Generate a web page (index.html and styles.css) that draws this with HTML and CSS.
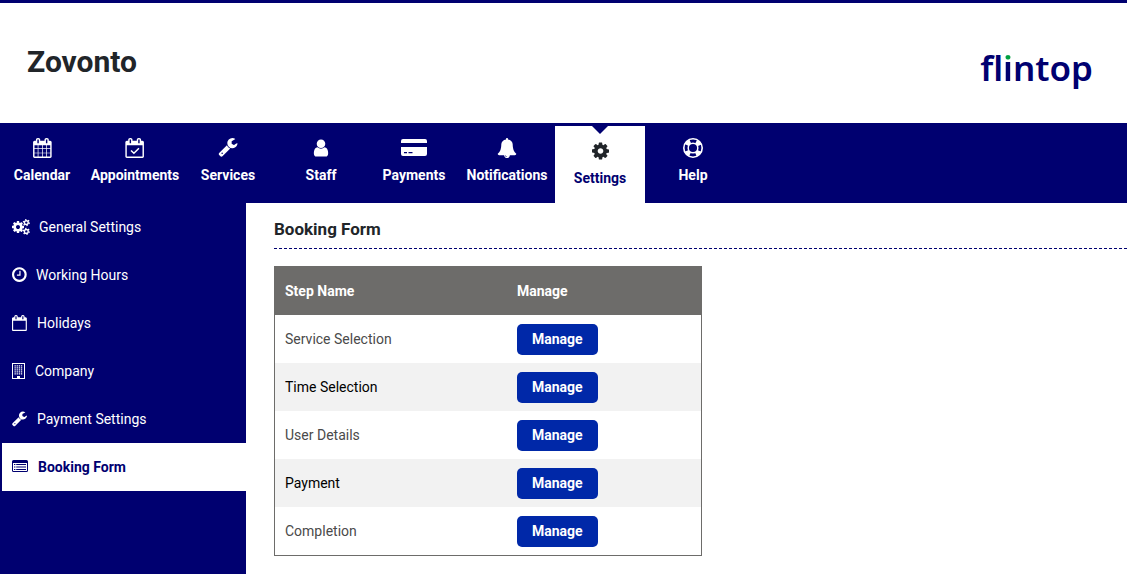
FILE: index.html
```html
<!DOCTYPE html>
<html lang="en">
<head>
<meta charset="utf-8">
<meta name="viewport" content="width=device-width, initial-scale=1">
<title>Zovonto - Booking Form</title>
<link rel="stylesheet" href="styles.css">
</head>
<body>
<svg class="sprite" aria-hidden="true">
  <symbol id="wrench" viewBox="64 128 1664 1664"><path d="M448 1472q0-26-19-45t-45-19-45 19-19 45 19 45 45 19 45-19 19-45zm644-420l-682 682q-37 37-90 37-52 0-91-37l-106-108q-38-36-38-90 0-53 38-91l681-681q39 98 114.500 173.500t173.500 114.500zm634-435q0 39-23 106-47 134-164.500 217.500t-258.500 83.500q-185 0-316.500-131.500t-131.500-316.500 131.500-316.500 316.500-131.500q58 0 121.500 16.500t107.500 46.500q16 11 16 28t-16 28l-293 169v224l193 107q5-3 79-48.500t135.500-81 70.500-35.500q15 0 23.500 10t8.500 25z"/></symbol>
  <symbol id="cog" viewBox="128 128 1536 1536"><path d="M1152 896q0-106-75-181t-181-75-181 75-75 181 75 181 181 75 181-75 75-181zm512-109v222q0 12-8 23t-20 13l-185 28q-19 54-39 91 35 50 107 138 10 12 10 25t-9 23q-27 37-99 108t-94 71q-12 0-26-9l-138-108q-44 23-91 38-16 136-29 186-7 28-36 28h-222q-14 0-24.500-8.500t-11.500-21.500l-28-184q-49-16-90-37l-141 107q-10 9-25 9-14 0-25-11-126-114-165-168-7-10-7-23 0-12 8-23 15-21 51-66.500t54-70.500q-27-50-41-99l-183-27q-13-2-21-12.500t-8-23.500v-222q0-12 8-23t19-13l186-28q14-46 39-92-40-57-107-138-10-12-10-24 0-10 9-23 26-36 98.500-107.500t94.500-71.500q13 0 26 10l138 107q44-23 91-38 16-136 29-186 7-28 36-28h222q14 0 24.500 8.500t11.500 21.500l28 184q49 16 90 37l142-107q9-9 24-9 13 0 25 10 129 119 165 170 7 8 7 22 0 12-8 23-15 21-51 66.500t-54 70.500q26 50 41 98l183 28q13 2 21 12.500t8 23.500z"/></symbol>
</svg>

<header class="header">
  <h1 class="title">Zovonto</h1>
  <a class="logo" href="#">fl<span class="logo-i">i</span>ntop</a>
</header>

<nav class="nav" aria-label="Main">
  <a class="nav-item" href="#">
    <svg class="nav-icon" width="20" height="20" viewBox="-32 0 1792 1792"><path d="M192 1664h288v-288h-288v288zm352 0h320v-288h-320v288zm-352-352h288v-320h-288v320zm352 0h320v-320h-320v320zm-352-384h288v-288h-288v288zm736 736h320v-288h-320v288zm-384-736h320v-288h-320v288zm768 736h288v-288h-288v288zm-384-352h320v-320h-320v320zm-352-864v-288q0-13-9.500-22.500t-22.500-9.500h-64q-13 0-22.500 9.500t-9.500 22.500v288q0 13 9.500 22.500t22.500 9.500h64q13 0 22.500-9.500t9.500-22.500zm736 864h288v-320h-288v320zm-384-384h320v-288h-320v288zm384 0h288v-288h-288v288zm32-480v-288q0-13-9.500-22.500t-22.500-9.500h-64q-13 0-22.500 9.500t-9.500 22.500v288q0 13 9.500 22.500t22.500 9.500h64q13 0 22.500-9.500t9.500-22.500zm384-64v1280q0 52-38 90t-90 38h-1408q-52 0-90-38t-38-90v-1280q0-52 38-90t90-38h128v-96q0-66 47-113t113-47h64q66 0 113 47t47 113v96h384v-96q0-66 47-113t113-47h64q66 0 113 47t47 113v96h128q52 0 90 38t38 90z"/></svg>
    <span>Calendar</span>
  </a>
  <a class="nav-item" href="#">
    <svg class="nav-icon" width="20" height="20" viewBox="32 0 1792 1792"><path d="M192 1664h1408v-1024h-1408v1024zm384-1216v-288q0-14-9-23t-23-9h-64q-14 0-23 9t-9 23v288q0 14 9 23t23 9h64q14 0 23-9t9-23zm768 0v-288q0-14-9-23t-23-9h-64q-14 0-23 9t-9 23v288q0 14 9 23t23 9h64q14 0 23-9t9-23zm384-64v1280q0 52-38 90t-90 38h-1408q-52 0-90-38t-38-90v-1280q0-52 38-90t90-38h128v-96q0-66 47-113t113-47h64q66 0 113 47t47 113v96h384v-96q0-66 47-113t113-47h64q66 0 113 47t47 113v96h128q52 0 90 38t38 90z"/><path class="line" d="M570 1110l260 260 450-450" stroke-width="130"/></svg>
    <span>Appointments</span>
  </a>
  <a class="nav-item" href="#">
    <svg class="nav-icon" width="20" height="20"><use href="#wrench" width="20" height="19"/></svg>
    <span>Services</span>
  </a>
  <a class="nav-item" href="#">
    <svg class="nav-icon" width="20" height="20" viewBox="0 0 1792 1792"><path d="M1536 1399q0 109-62.500 187t-150.500 78h-854q-88 0-150.500-78t-62.500-187q0-85 8.500-160.500t31.500-152 58.500-131 94-89 134.500-34.500q131 128 313 128t313-128q76 0 134.500 34.500t94 89 58.500 131 31.500 152 8.500 160.500zm-256-887q0 159-112.500 271.500t-271.500 112.500-271.500-112.500-112.500-271.500 112.500-271.500 271.500-112.500 271.500 112.500 112.500 271.500z"/></svg>
    <span>Staff</span>
  </a>
  <a class="nav-item" href="#">
    <svg class="nav-icon" width="26" height="20" viewBox="0 0 26 20"><path d="M0 5V3q0-2 2-2h22q2 0 2 2v2zM0 9h26v7q0 2-2 2H2q-2 0-2-2zM3 14v1.300h3V14zm4.500 0v1.300h4V14z" fill-rule="evenodd"/></svg>
    <span>Payments</span>
  </a>
  <a class="nav-item" href="#">
    <svg class="nav-icon" width="20" height="20" viewBox="0 0 1792 1792"><path d="M912 1696q0-16-16-16-59 0-101.500-42.500t-42.500-101.500q0-16-16-16t-16 16q0 73 51.500 124.500t124.500 51.500q16 0 16-16zm816-288q0 52-38 90t-90 38h-448q0 106-75 181t-181 75-181-75-75-181h-448q-52 0-90-38t-38-90q50-42 91-88t85-119.500 74.500-158.500 50-206 19.500-260q0-152 117-282.500t307-158.500q-8-19-8-39 0-40 28-68t68-28 68 28 28 68q0 20-8 39 190 28 307 158.500t117 282.500q0 139 19.500 260t50 206 74.500 158.500 85 119.500 91 88z"/></svg>
    <span>Notifications</span>
  </a>
  <a class="nav-item nav-item-active" href="#" aria-current="page">
    <svg class="nav-icon" width="20" height="20"><use href="#cog" x="2" y="1" width="17" height="18"/></svg>
    <span>Settings</span>
  </a>
  <a class="nav-item" href="#">
    <svg class="nav-icon" width="20" height="20" viewBox="0 0 20 20"><g class="line"><circle cx="10" cy="10" r="9.200" stroke-width="1.600"/><circle cx="10" cy="10" r="4.800" stroke-width="1.500"/><circle cx="10" cy="10" r="7" stroke-width="4.500" stroke-dasharray="5 5.996" stroke-dashoffset="-3"/></g></svg>
    <span>Help</span>
  </a>
</nav>

<div class="body">
  <nav class="sidebar" aria-label="Settings">
    <a class="side-item" href="#">
      <svg width="18" height="16" viewBox="0 0 18 16"><use href="#cog" x="0" y="2" width="12" height="12"/><g class="line" stroke-width="1.400"><circle cx="14.300" cy="3.600" r="1.900"/><circle cx="14.300" cy="12.400" r="1.900"/><circle cx="14.300" cy="3.600" r="2.900" stroke-dasharray="1.300 1.737"/><circle cx="14.300" cy="12.400" r="2.900" stroke-dasharray="1.300 1.737"/></g></svg>
      General Settings
    </a>
    <a class="side-item" href="#">
      <svg width="15" height="16" viewBox="128 177 1566 1538"><path d="M1024 544v448q0 14-9 23t-23 9h-320q-14 0-23-9t-9-23v-64q0-14 9-23t23-9h224v-352q0-14 9-23t23-9h64q14 0 23 9t9 23zm416 352q0-148-73-273t-198-198-273-73-273 73-198 198-73 273 73 273 198 198 273 73 273-73 198-198 73-273zm224 0q0 209-103 385.500t-279.500 279.500-385.500 103-385.500-103-279.500-279.500-103-385.500 103-385.500 279.500-279.500 385.500-103 385.500 103 279.500 279.500 103 385.500z"/></svg>
      Working Hours
    </a>
    <a class="side-item" href="#">
      <svg width="16" height="16" viewBox="64 0 1792 1792"><path d="M192 1664h1408v-1024h-1408v1024zm384-1216v-288q0-14-9-23t-23-9h-64q-14 0-23 9t-9 23v288q0 14 9 23t23 9h64q14 0 23-9t9-23zm768 0v-288q0-14-9-23t-23-9h-64q-14 0-23 9t-9 23v288q0 14 9 23t23 9h64q14 0 23-9t9-23zm384-64v1280q0 52-38 90t-90 38h-1408q-52 0-90-38t-38-90v-1280q0-52 38-90t90-38h128v-96q0-66 47-113t113-47h64q66 0 113 47t47 113v96h384v-96q0-66 47-113t113-47h64q66 0 113 47t47 113v96h128q52 0 90 38t38 90z"/></svg>
      Holidays
    </a>
    <a class="side-item" href="#">
      <svg width="14" height="16" viewBox="0 0 14 16"><path d="M0 0h13v16H0zM1 1v14h4v-2h3v2h4V1z" fill-rule="evenodd"/><path class="line" d="M2.500 2.800h8.500M2.500 4.800h8.500M2.500 6.800h8.500M2.500 8.800h8.500M2.500 10.800h8.500" stroke-width="1.200" stroke-dasharray="1.300 .8"/></svg>
      Company
    </a>
    <a class="side-item" href="#">
      <svg width="16" height="16"><use href="#wrench" width="15" height="16"/></svg>
      Payment Settings
    </a>
    <a class="side-item side-item-active" href="#" aria-current="page">
      <svg width="17" height="16" viewBox="0 0 17 16"><path d="M1.500 1h13q1.500 0 1.500 1.500v9q0 1.500-1.500 1.500h-13Q0 13 0 11.500v-9Q0 1 1.500 1zM1 4v7.500q0 .5.500.5h13q.5 0 .5-.5V4z" fill-rule="evenodd"/><path class="line" d="M2 5.500h1.400m.800 0H14M2 8h1.400m.800 0H14M2 10.500h1.400m.800 0H14" stroke-width="1.200"/></svg>
      Booking Form
    </a>
  </nav>

  <main class="content">
    <h2 class="heading">Booking Form</h2>
    <table class="steps">
      <thead>
        <tr><th scope="col">Step Name</th><th scope="col">Manage</th></tr>
      </thead>
      <tbody>
        <tr><td>Service Selection</td><td><button class="btn" type="button">Manage</button></td></tr>
        <tr><td>Time Selection</td><td><button class="btn" type="button">Manage</button></td></tr>
        <tr><td>User Details</td><td><button class="btn" type="button">Manage</button></td></tr>
        <tr><td>Payment</td><td><button class="btn" type="button">Manage</button></td></tr>
        <tr><td>Completion</td><td><button class="btn" type="button">Manage</button></td></tr>
      </tbody>
    </table>
  </main>
</div>
</body>
</html>
```
FILE: styles.css
```css
:root {
  --navy: #000070;
  --ink: #212529;
  --gray: #6d6c6a;
}

* {
  box-sizing: border-box;
}

body {
  margin: 0;
  min-height: 100vh;
  display: flex;
  flex-direction: column;
  background: #fff;
  color: var(--ink);
  font: 14px/20px Roboto, sans-serif;
}

a {
  color: inherit;
  text-decoration: none;
}

svg {
  fill: currentColor;
  flex: none;
}

.line {
  fill: none;
  stroke: currentColor;
}

.sprite {
  display: none;
}

.header {
  display: flex;
  justify-content: space-between;
  align-items: flex-start;
  padding: 34px 34px 28px 27px;
  border-top: 3px solid var(--navy);
}

.title {
  margin: 0;
  font-size: 30px;
  line-height: 50px;
  font-weight: 700;
}

.logo {
  padding-top: 4px;
  color: var(--navy);
  font: 600 35px/54px "Noto Sans", sans-serif;
  font-variant-ligatures: none;
}

.logo-i {
  background: linear-gradient(#00a040 0 16px, var(--navy) 16px);
  -webkit-background-clip: text;
  background-clip: text;
  color: transparent;
}

.nav {
  display: flex;
  gap: 3px;
  margin-left: -3px;
  padding-top: 3px;
  background: var(--navy);
  color: #fff;
  font-weight: 700;
}

.nav-item {
  position: relative;
  display: flex;
  flex-direction: column;
  align-items: center;
  gap: 7px;
  width: 90px;
  padding: 12px 0 18px;
  white-space: nowrap;
}

.nav-item-active {
  padding: 15px 0;
  background: #fff;
  color: var(--navy);
}

.nav-item-active .nav-icon {
  color: var(--ink);
}

.nav-item-active::before {
  content: "";
  position: absolute;
  top: 0;
  left: 50%;
  margin-left: -8px;
  border: 8px solid transparent;
  border-top-color: var(--navy);
  border-bottom: 0;
}

.body {
  display: flex;
  flex: 1;
}

.sidebar {
  flex: 0 0 246px;
  padding-left: 2px;
  background: var(--navy);
  color: #fff;
}

.side-item {
  display: flex;
  align-items: center;
  gap: 9px;
  height: 48px;
  padding-left: 10px;
}

.side-item-active {
  background: #fff;
  color: var(--navy);
  font-weight: 700;
}

.content {
  flex: 1;
  padding: 16px 0 17px 28px;
}

.heading {
  margin: 0 0 17px;
  padding-bottom: 9px;
  border-bottom: 1px dashed var(--navy);
  font-size: 17px;
  line-height: 20px;
  font-weight: 700;
}

.steps {
  width: 428px;
  border: 1px solid var(--gray);
  border-spacing: 0;
}

.steps th,
.steps td {
  height: 48px;
  padding: 0 10px;
  text-align: left;
}

.steps th:first-child {
  width: 232px;
}

.steps th {
  background: var(--gray);
  color: #fff;
}

.steps td {
  color: #4a4a4a;
}

.steps tbody tr:nth-child(even) td {
  background: #f2f2f2;
  color: #000;
}

.btn {
  display: block;
  padding: 5px 15px 6px;
  border: 0;
  border-radius: 5px;
  background: #0028a8;
  color: #fff;
  font: inherit;
  font-weight: 700;
}
```
